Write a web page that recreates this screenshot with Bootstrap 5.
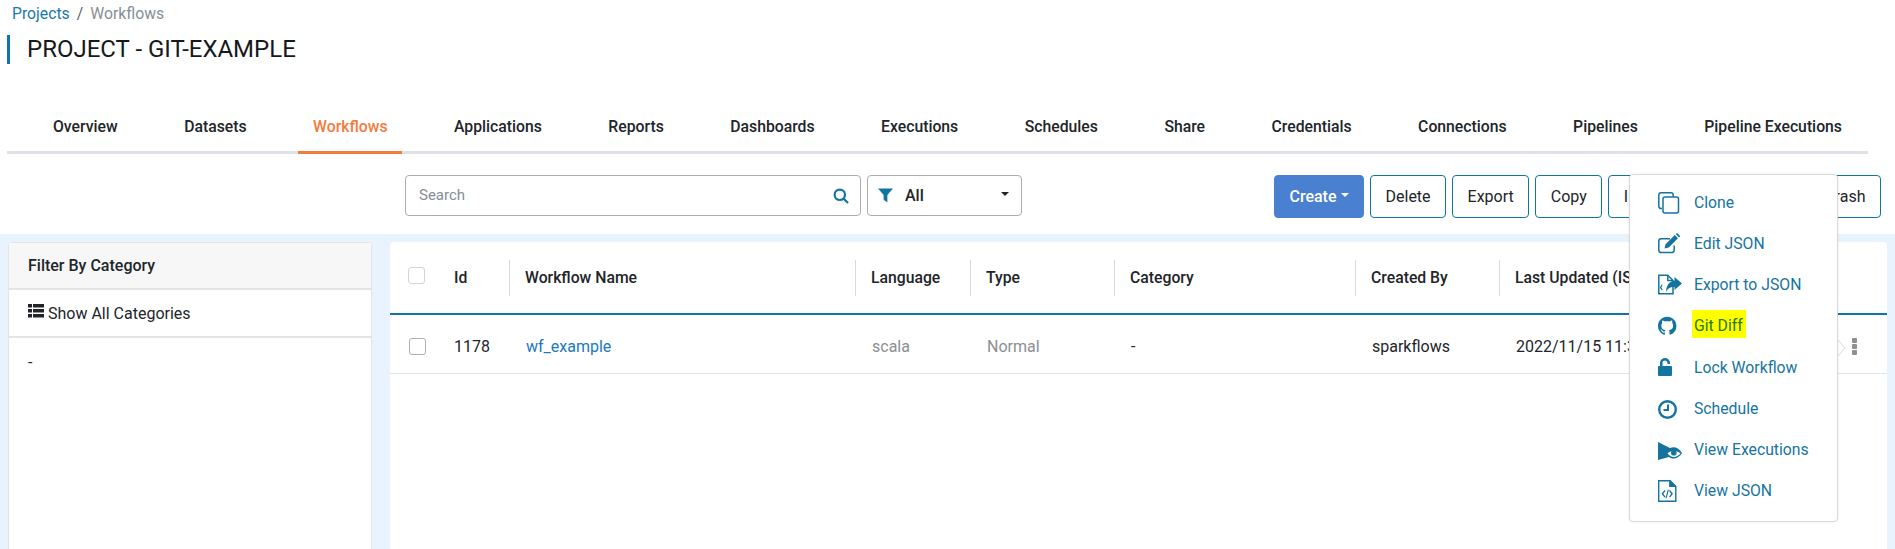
<!DOCTYPE html>
<html lang="en">
<head>
    <meta charset="UTF-8">
    <meta name="viewport" content="width=device-width, initial-scale=1.0">
    <title>Project - Workflows</title>
    <link href="https://cdn.jsdelivr.net/npm/bootstrap@5.3.0/dist/css/bootstrap.min.css" rel="stylesheet">
    <style>
        html, body { height: 100%; }
        body { font-family: Roboto, "Liberation Sans", sans-serif; font-size: 16px; color: #212529; overflow: hidden; position: relative; }
        a { text-decoration: none; }
        .top-area { height: 234px; padding: 0 7px; }
        .crumbs { height: 27px; padding: 4px 5px 0; margin: 0; line-height: 20px; font-size: 15.75px; --bs-breadcrumb-item-padding-x: 7px; }
        .crumbs a { color: #1a78a8; }
        .crumbs .breadcrumb-item.active { color: #868e96; }
        .page-title { margin: 8px 0 0; height: 29px; border-left: 3px solid #0f75a3; padding-left: 17px; font-size: 24px; font-weight: 400; line-height: 29px; color: #16181b; }
        .tab-bar { margin-top: 46px; height: 44px; border-bottom: 3px solid #dfe1e6; flex-wrap: nowrap; width: 1861px; padding-left: 31px; gap: 36.5px; }
        .tab-bar .nav-link { color: #212529; font-size: 15.75px; font-weight: 500; padding: 0 15px; height: 44px; line-height: 34px; text-align: center; white-space: nowrap; }
        .tab-bar .nav-link.active { color: #f47b3d; border-bottom: 3px solid #f47b3d; }
        .tool-row { margin-top: 21px; height: 43px; }
        .search-box { width: 456px; height: 41px; margin-left: 398px; border: 1px solid #adadad; border-radius: 4px; padding: 0 11px; }
        .search-box input { border: 0; outline: 0; flex: 1; font-size: 15px; }
        .search-box input::placeholder { color: #868e96; }
        .filter-box { width: 155px; height: 41px; margin-left: 6px; border: 1px solid #adadad; border-radius: 4px; padding: 0 12px 0 10px; }
        .filter-label { margin-left: 12px; font-weight: 500; }
        .tool-btn { height: 43px; font-size: 16px; font-weight: 400; color: #212529; background: #fff; border: 1px solid #0f75a3; border-radius: 4px; padding: 0 14.5px; }
        .create-btn { background: #4a80d0; border-color: #4a80d0; color: #fff; font-weight: 500; width: 90px; padding: 0; }
        .btn-group-gap { gap: 6px; margin-left: auto; margin-right: 7px; width: 607px; }
        .lower-area { background: #e9f3fd; height: 315px; padding: 8px 8px 0; gap: 18px; overflow: hidden; }
        .cat-card { width: 364px; height: 400px; border-radius: 4px; border: 1px solid #e2e4e7; background: #fff; flex: none; }
        .cat-head { height: 47px; background: #f7f7f7; border-bottom: 2px solid #e2e4e7; padding: 0 19px; font-weight: 500; line-height: 45px; }
        .cat-all { height: 48px; border-bottom: 2px solid #e2e4e7; padding: 0 19px; line-height: 48px; }
        .cat-item { padding: 13px 19px; }
        .wf-panel { width: 1497px; height: 400px; background: #fff; border-radius: 4px; flex: none; }
        .wf-table { table-layout: fixed; width: 1497px; margin: 0; --bs-table-bg: transparent; }
        .wf-table th { height: 72px; padding: 0 0 0 16px; border-bottom: 2px solid #0f75a3; font-size: 15.75px; font-weight: 500; vertical-align: middle; position: relative; white-space: nowrap; }
        .wf-table th.sep::before { content: ""; position: absolute; left: 0; top: 18px; height: 36px; border-left: 1px solid #d7d9dc; }
        .wf-table td { height: 59px; padding: 6px 0 0 17px; border-bottom: 1px solid #e2e4e7; vertical-align: middle; white-space: nowrap; }
        .wf-table td:first-child { padding-left: 16px; }
        .wf-table th:nth-child(2) { padding-left: 17px; }
        .check-box { display: block; width: 17px; height: 17px; border: 1px solid #adb0b8; border-radius: 3px; margin: 0 0 0 3px; }
        .head-check { border-color: #d8d3d3; margin: -5px 0 0 2px; }
        .muted-cell { color: #8a8f94; }
        .wf-link { color: #1a78c2; font-weight: 400; }
        .kebab { position: absolute; left: 1852px; top: 338px; width: 5px; display: flex; flex-direction: column; gap: 1px; }
        .kebab i { display: block; height: 5px; background: #8f8f8f; border-radius: 1px; }
        .row-chevron { position: absolute; left: 1838px; top: 340px; }
        .action-menu { display: block; position: absolute; left: 1629px; top: 174px; width: 209px; height: 348px; padding: 7px 0 0; border: 1px solid #d9d9d9; border-radius: 4px; background: #fff; box-shadow: 0 0 3px rgba(0,0,0,.08); }
        .action-menu .dropdown-item { display: flex; align-items: center; height: 41.2px; padding: 0 0 0 28px; color: #15749f; font-weight: 400; font-size: 15.75px; }
        .menu-ico { width: 24px; height: 22px; flex: none; margin-right: 12px; fill: #15749f; stroke: none; }
        .ico-line { fill: none; stroke: #15749f; stroke-width: 1.5; }
        .git-hl { display: block; height: 28px; line-height: 32px; margin: 0 0 4px -2px; padding: 0 3px 0 2px; background: #ffff00; color: #1e7a00; }
    </style>
</head>
<body>
    <div class="top-area">
        <ol class="breadcrumb crumbs">
            <li class="breadcrumb-item"><a href="#">Projects</a></li>
            <li class="breadcrumb-item active">Workflows</li>
        </ol>
        <h1 class="page-title">PROJECT - GIT-EXAMPLE</h1>

        <ul class="nav tab-bar">
            <li class="nav-item"><a class="nav-link" href="#">Overview</a></li>
            <li class="nav-item"><a class="nav-link" href="#">Datasets</a></li>
            <li class="nav-item"><a class="nav-link active" href="#">Workflows</a></li>
            <li class="nav-item"><a class="nav-link" href="#">Applications</a></li>
            <li class="nav-item"><a class="nav-link" href="#">Reports</a></li>
            <li class="nav-item"><a class="nav-link" href="#">Dashboards</a></li>
            <li class="nav-item"><a class="nav-link" href="#">Executions</a></li>
            <li class="nav-item"><a class="nav-link" href="#">Schedules</a></li>
            <li class="nav-item"><a class="nav-link" href="#">Share</a></li>
            <li class="nav-item"><a class="nav-link" href="#">Credentials</a></li>
            <li class="nav-item"><a class="nav-link" href="#">Connections</a></li>
            <li class="nav-item"><a class="nav-link" href="#">Pipelines</a></li>
            <li class="nav-item"><a class="nav-link" href="#">Pipeline Executions</a></li>
        </ul>

        <div class="d-flex tool-row">
            <div class="d-flex align-items-center search-box">
                <input type="text" placeholder="Search">
                <svg width="16" height="16" viewBox="0 0 16 16" fill="none" stroke="#0f75a3" stroke-width="2.2"><circle cx="6.800" cy="6.800" r="5.200"/><path d="M10.600 10.600 15 15"/></svg>
            </div>
            <div class="d-flex align-items-center filter-box">
                <svg width="15" height="15" viewBox="0 0 16 15" fill="#0f75a3"><path d="M0 0h16L10 7v8L6 12V7z"/></svg>
                <span class="filter-label">All</span>
                <span class="dropdown-toggle ms-auto"></span>
            </div>
            <div class="d-flex btn-group-gap">
                <button class="tool-btn create-btn dropdown-toggle">Create</button>
                <button class="tool-btn">Delete</button>
                <button class="tool-btn">Export</button>
                <button class="tool-btn">Copy</button>
                <button class="tool-btn">Import</button>
                <button class="tool-btn ms-auto">View Trash</button>
            </div>
        </div>
    </div>

    <div class="d-flex lower-area">
        <div class="cat-card">
            <div class="cat-head">Filter By Category</div>
            <div class="cat-all">
                <svg width="16" height="14" viewBox="0 0 16 14" fill="#212529" class="align-text-top"><path d="M0 0h4v3.600H0zM5 0h11v3.600H5zM0 5h4v3.600H0zM5 5h11v3.600H5zM0 10h4v3.600H0zM5 10h11v3.600H5z"/></svg>
                Show All Categories
            </div>
            <div class="cat-item">-</div>
        </div>
        <div class="wf-panel">
            <table class="table wf-table">
                <colgroup>
                    <col style="width:47px"><col style="width:72px"><col style="width:346px"><col style="width:115px"><col style="width:144px"><col style="width:241px"><col style="width:144px"><col>
                </colgroup>
                <thead>
                    <tr>
                        <th><span class="check-box head-check"></span></th>
                        <th>Id</th>
                        <th class="sep">Workflow Name</th>
                        <th class="sep">Language</th>
                        <th class="sep">Type</th>
                        <th class="sep">Category</th>
                        <th class="sep">Created By</th>
                        <th class="sep">Last Updated (IST)</th>
                    </tr>
                </thead>
                <tbody>
                    <tr>
                        <td><span class="check-box"></span></td>
                        <td>1178</td>
                        <td><a class="wf-link" href="#">wf_example</a></td>
                        <td class="muted-cell">scala</td>
                        <td class="muted-cell">Normal</td>
                        <td>-</td>
                        <td>sparkflows</td>
                        <td>2022/11/15 11:30:00</td>
                    </tr>
                </tbody>
            </table>
        </div>
    </div>

    <svg class="row-chevron" width="8" height="16" viewBox="0 0 8 16" fill="none" stroke="#dcdcdc"><path d="M0 0l7 8-7 8"/></svg>
    <div class="kebab"><i></i><i></i><i></i></div>

    <div class="dropdown-menu show action-menu">
        <a class="dropdown-item" href="#"><svg class="menu-ico" viewBox="0 0 24 22"><path class="ico-line" d="M4 16.500H3a2.200 2.200 0 0 1-2.200-2.200V3A2.200 2.200 0 0 1 3 .800h10A2.200 2.200 0 0 1 15.200 3v2"/><rect class="ico-line" x="5" y="5" width="15.500" height="16" rx="2"/></svg>Clone</a>
        <a class="dropdown-item" href="#"><svg class="menu-ico" viewBox="0 0 24 22"><path class="ico-line" d="M12 5.800H3.200a2.400 2.400 0 0 0-2.400 2.400v9a2.400 2.400 0 0 0 2.400 2.400h10.600a2.400 2.400 0 0 0 2.400-2.400v-4.600"/><path d="M6.500 15.500l1-4.200L16.800 2l3.200 3.200-9.300 9.300zM17.800 1l1.300-1 3.200 3.200-1.300 1.200z"/></svg>Edit JSON</a>
        <a class="dropdown-item" href="#"><svg class="menu-ico" viewBox="0 0 24 22"><path class="ico-line" d="M15 19.800V6.500L9.800 1.300H.8v18.500z"/><path class="ico-line" d="M9.800 1.300v5.200H15"/><path d="M3.800 10.500l-2 3 2 3 .9-.7-1.500-2.300 1.500-2.300zM24 9.500L16.500 3v3.800C12 7 8.500 10.500 8 18c2-3.800 4.500-5 8.500-5.200V16z"/></svg>Export to JSON</a>
        <a class="dropdown-item" href="#"><svg class="menu-ico" viewBox="0 0 24 22"><path transform="translate(0 1.800) scale(1.150)" d="M8 0C3.580 0 0 3.580 0 8c0 3.540 2.290 6.530 5.470 7.590.4.070.55-.17.55-.38 0-.19-.01-.82-.01-1.490-2.010.37-2.530-.49-2.690-.94-.09-.23-.48-.94-.82-1.130-.28-.15-.68-.52-.01-.53.63-.01 1.080.58 1.230.82.72 1.210 1.870.87 2.330.66.07-.52.28-.87.51-1.070-1.780-.2-3.640-.89-3.640-3.950 0-.87.31-1.590.82-2.150-.08-.2-.36-1.020.08-2.120 0 0 .67-.21 2.200.82.64-.18 1.320-.27 2-.27.68 0 1.360.09 2 .27 1.530-1.040 2.200-.82 2.200-.82.44 1.100.16 1.920.08 2.120.51.56.82 1.270.82 2.150 0 3.070-1.870 3.750-3.650 3.950.29.25.54.73.54 1.480 0 1.070-.01 1.930-.01 2.200 0 .21.15.46.55.38A8.013 8.013 0 0 0 16 8c0-4.420-3.580-8-8-8z"/></svg><span class="git-hl">Git Diff</span></a>
        <a class="dropdown-item" href="#"><svg class="menu-ico" viewBox="0 0 24 22"><path d="M2 10V7a5 5 0 0 1 10 0v1H9.500V7a2.500 2.500 0 0 0-5 0v3H13a1 1 0 0 1 1 1v8a1 1 0 0 1-1 1H1a1 1 0 0 1-1-1v-8a1 1 0 0 1 1-1z"/></svg>Lock Workflow</a>
        <a class="dropdown-item" href="#"><svg class="menu-ico" viewBox="0 0 24 22"><path fill-rule="evenodd" d="M9.500 2a9.500 9.500 0 1 1 0 19 9.500 9.500 0 0 1 0-19zm0 2.400a7.100 7.100 0 1 0 0 14.200 7.100 7.100 0 0 0 0-14.200z"/><path d="M9 6.500h2V13H5.500v-2H9z"/></svg>Schedule</a>
        <a class="dropdown-item" href="#"><svg class="menu-ico" viewBox="0 0 24 22"><path d="M0 3l12 6c4-2 9-.5 12 5-3 5.500-9 7-13 4L0 21z"/><path fill="#fff" d="M9.500 14.500c3.500-3.500 8.500-4 13 0-4 4.500-9 4.800-13 0z"/><circle cx="15.800" cy="13.800" r="2.800"/></svg>View Executions</a>
        <a class="dropdown-item" href="#"><svg class="menu-ico" viewBox="0 0 24 22"><path fill-rule="evenodd" d="M0 0h12.500l6 6v16H0zm1.400 1.400v19.200h15.700V7h-6V1.400z"/><path d="M6.500 10l-3 3.800 3 3.800 1-.9-2.200-2.900 2.200-2.900zM12 10l3 3.800-3 3.800-1-.9 2.200-2.900-2.200-2.900zM9.800 9.500l1.100.2-2.300 8.500-1.100-.2z"/></svg>View JSON</a>
    </div>

    <script src="https://cdn.jsdelivr.net/npm/bootstrap@5.3.0/dist/js/bootstrap.bundle.min.js"></script>
</body>
</html>
